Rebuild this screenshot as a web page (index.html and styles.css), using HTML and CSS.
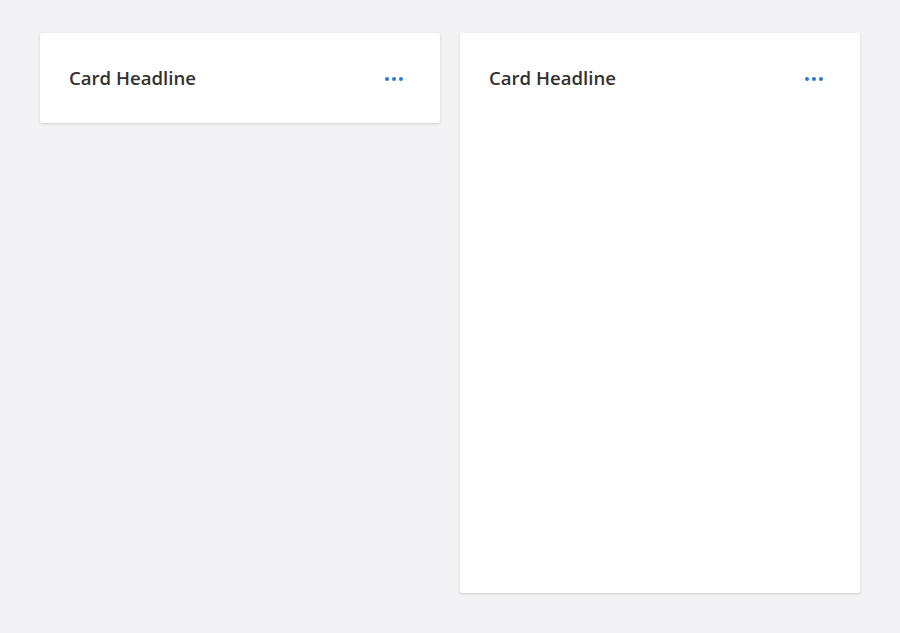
FILE: index.html
```html
<!DOCTYPE html>
<html>
<head>
<meta charset="utf-8">
<link rel="stylesheet" href="styles.css">
</head>
<body>
<div class="board">
  <section class="card">
    <header class="card-header">
      <h2 class="card-title">Card Headline</h2>
      <button class="more" aria-label="More"><span class="dot"></span><span class="dot"></span><span class="dot"></span></button>
    </header>
  </section>
  <section class="card card-tall">
    <header class="card-header">
      <h2 class="card-title">Card Headline</h2>
      <button class="more" aria-label="More"><span class="dot"></span><span class="dot"></span><span class="dot"></span></button>
    </header>
  </section>
</div>
</body>
</html>
```
FILE: styles.css
```css
html, body {
  margin: 0;
  padding: 0;
  background: #f3f3f5;
  font-family: "Open Sans", "Noto Sans", sans-serif;
}
.board {
  display: flex;
  align-items: flex-start;
  gap: 20px;
  padding: 33px 40px;
}
.card {
  width: 400px;
  height: 90px;
  background: #fff;
  border-radius: 2px;
  box-shadow: 0 1px 3px rgba(0, 0, 0, 0.14), 0 0 1px rgba(0, 0, 0, 0.06);
  box-sizing: border-box;
}
.card-tall {
  height: 560px;
}
.card-header {
  height: 90px;
  display: flex;
  align-items: center;
  justify-content: space-between;
  padding: 0 30px 0 29px;
  box-sizing: border-box;
}
.card-title {
  margin: 0 0 1px;
  font-size: 18.6px;
  font-weight: 600;
  color: #323130;
  line-height: 24px;
}
.more {
  width: 32px;
  height: 32px;
  border: 0;
  padding: 0;
  background: transparent;
  display: flex;
  align-items: center;
  justify-content: center;
  gap: 3px;
  margin-top: 2px;
}
.dot {
  width: 4px;
  height: 4px;
  border-radius: 50%;
  background: #2b78d0;
}
```
